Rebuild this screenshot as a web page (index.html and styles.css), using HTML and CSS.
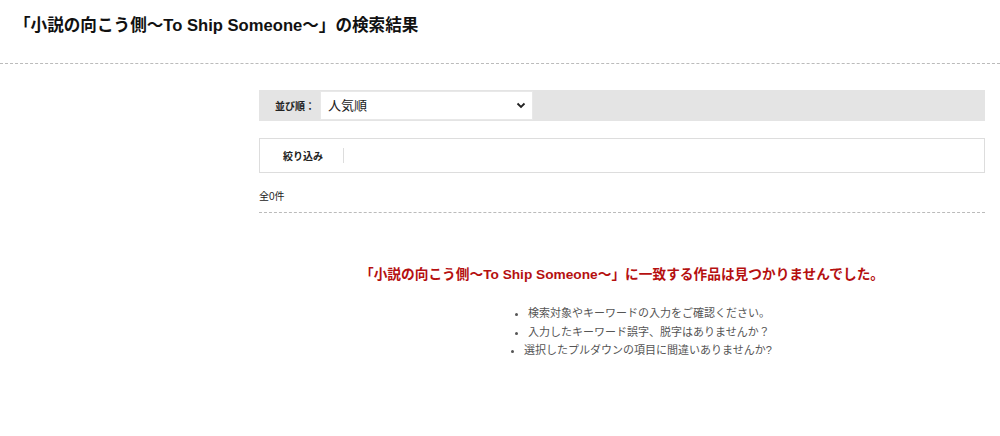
FILE: index.html
```html
<!DOCTYPE html>
<html lang="ja">
<head>
    <meta charset="UTF-8">
    <meta name="viewport" content="width=device-width, initial-scale=1.0">
    <title>検索結果</title>
    <link rel="stylesheet" href="styles.css">
</head>
<body>
    <header class="page-head">
        <h1>「小説の向こう側〜To Ship Someone〜」の検索結果</h1>
    </header>

    <main class="results">
        <div class="sort-bar">
            <span class="sort-label">並び順：</span>
            <div class="select-wrap">
                <select class="sort-select">
                    <option>人気順</option>
                    <option>新着順</option>
                </select>
                <svg class="select-arrow" width="10" height="7" viewBox="0 0 10 7">
                    <path d="M1.5 1.5 L5 5 L8.5 1.5" fill="none" stroke="#222" stroke-width="1.8"/>
                </svg>
            </div>
        </div>

        <div class="filter-box">
            <span class="filter-label">絞り込み</span>
            <span class="filter-sep"></span>
        </div>

        <p class="count">全0件</p>

        <div class="empty">
            <p class="empty-title">「小説の向こう側〜To Ship Someone〜」に一致する作品は見つかりませんでした。</p>
            <ul class="hints">
                <li>検索対象やキーワードの入力をご確認ください。</li>
                <li>入力したキーワード誤字、脱字はありませんか？</li>
                <li class="hint-last">選択したプルダウンの項目に間違いありませんか?</li>
            </ul>
        </div>
    </main>
</body>
</html>
```

FILE: styles.css
```css
body {
    margin: 0;
    font-family: "Liberation Sans", "Noto Sans CJK JP", sans-serif;
    color: #222;
    background-color: #fff;
}

.page-head {
    height: 64px;
    border-bottom: 1px dashed #bbb;
    box-sizing: border-box;
    padding: 14px 0 0 14px;
}

.page-head h1 {
    margin: 0;
    font-size: 16.6px;
    font-weight: bold;
    line-height: 24px;
    color: #111;
}

.results {
    width: 726px;
    margin-left: 259px;
    padding-top: 26px;
}

.sort-bar {
    display: flex;
    align-items: center;
    height: 31px;
    background-color: #e4e4e4;
}

.sort-label {
    padding-left: 16px;
    font-size: 10px;
    font-weight: bold;
    width: 45px;
}

.select-wrap {
    position: relative;
}

.sort-select {
    appearance: none;
    -webkit-appearance: none;
    width: 213px;
    height: 29px;
    padding: 0 0 0 7px;
    border: 1px solid #e8e8e8;
    border-radius: 0;
    background-color: #fff;
    font-family: inherit;
    font-size: 13px;
    color: #222;
    outline: none;
}

.select-arrow {
    position: absolute;
    right: 7px;
    top: 11px;
}

.filter-box {
    display: flex;
    align-items: center;
    height: 35px;
    margin-top: 17px;
    border: 1px solid #ddd;
    box-sizing: border-box;
}

.filter-label {
    padding-left: 23px;
    width: 60px;
    font-size: 10px;
    font-weight: bold;
}

.filter-sep {
    width: 1px;
    height: 15px;
    background-color: #ddd;
}

.count {
    margin: 0;
    padding: 17px 0 8px;
    font-size: 10px;
    line-height: 14px;
    border-bottom: 1px dashed #bbb;
}

.empty {
    text-align: center;
    padding-top: 52px;
}

.empty-title {
    margin: 0 0 19px;
    font-size: 13.7px;
    font-weight: bold;
    line-height: 20px;
    color: #b51010;
}

.hints {
    display: inline-block;
    margin: 0 0 0 36px;
    padding: 0 0 0 20px;
    text-align: left;
    font-size: 11px;
    line-height: 18.5px;
    color: #555;
}

.hint-last {
    margin-left: -4px;
}
```
